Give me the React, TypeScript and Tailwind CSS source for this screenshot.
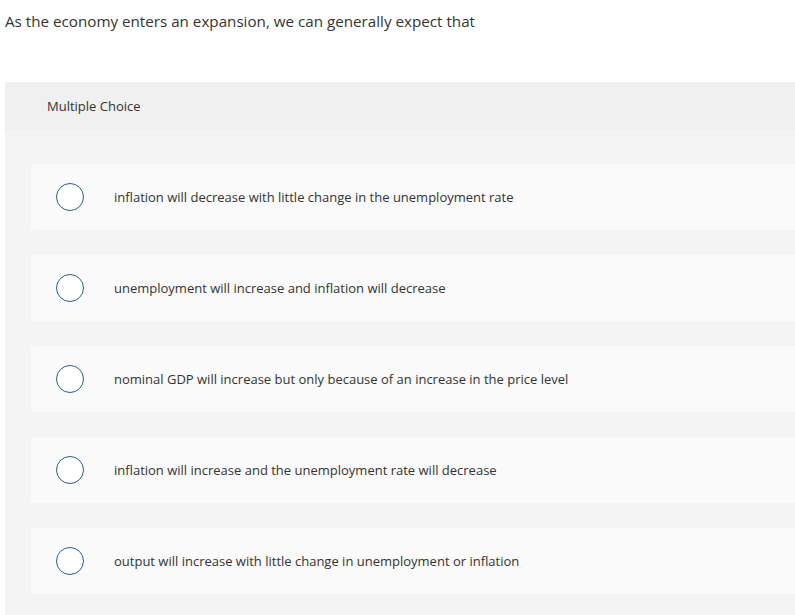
const choices = [
  "inflation will decrease with little change in the unemployment rate",
  "unemployment will increase and inflation will decrease",
  "nominal GDP will increase but only because of an increase in the price level",
  "inflation will increase and the unemployment rate will decrease",
  "output will increase with little change in unemployment or inflation",
];

export default function App() {
  return (
    <div className="min-h-[615px] bg-white text-[#333] font-['Open_Sans',sans-serif]">
      <p className="pl-[5px] pt-[11px] text-[15.2px] leading-[20px]">
        As the economy enters an expansion, we can generally expect that
      </p>

      <div className="ml-[5px] mt-[51px] bg-[#f4f4f4]">
        {/* Header */}
        <div className="h-[49px] bg-[#f0f0f0] pl-[42px] pt-px flex items-center text-[13px]">
          Multiple Choice
        </div>

        {/* Options */}
        <div className="pl-[26px] pt-[33px] pb-[21px] flex flex-col gap-[25px]">
          {choices.map((c) => (
            <label
              key={c}
              className="h-[66px] bg-[#fafafa] rounded-l-[3px] flex items-center pl-[25px] cursor-pointer"
            >
              <span className="w-[28px] h-[28px] rounded-full border-[1.5px] border-[#2c5c8a] bg-white shrink-0" />
              <span className="ml-[30px] pt-px text-[13px]">{c}</span>
            </label>
          ))}
        </div>
      </div>
    </div>
  );
}
